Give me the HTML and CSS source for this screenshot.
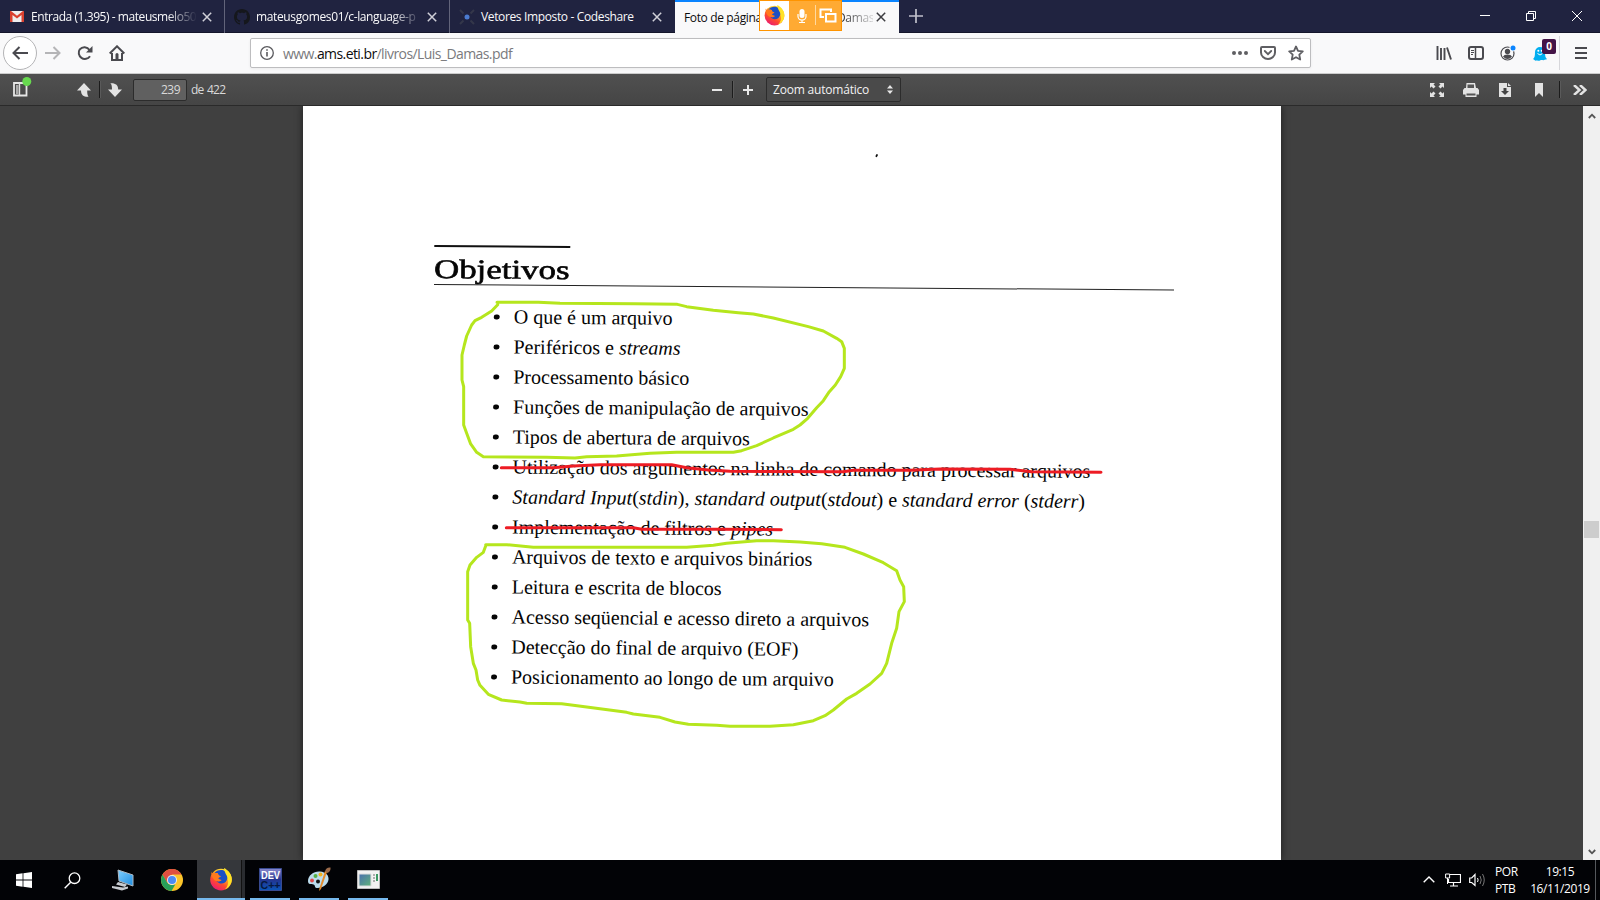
FILE: index.html
```html
<!DOCTYPE html>
<html lang="pt-BR">
<head>
<meta charset="utf-8">
<title>Foto de página inteira - Luis_Damas.pdf</title>
<link rel="stylesheet" href="styles.css">
</head>
<body>
<svg class="defs" width="0" height="0">
  <defs>
    <linearGradient id="ffbody" x1="0.8" y1="0" x2="0.2" y2="1"><stop offset="0" stop-color="#fff04a"/><stop offset=".35" stop-color="#ffb41e"/><stop offset=".65" stop-color="#ff4a2e"/><stop offset="1" stop-color="#e6147d"/></linearGradient>
    <linearGradient id="scr" x1="0" y1="0" x2="1" y2="1"><stop offset="0" stop-color="#7fd0ff"/><stop offset="1" stop-color="#1f8de0"/></linearGradient>
    <linearGradient id="dev" x1="0" y1="0" x2="0" y2="1"><stop offset="0" stop-color="#8b8bd0"/><stop offset=".5" stop-color="#25348f"/><stop offset="1" stop-color="#0a56b8"/></linearGradient>
    <linearGradient id="win" x1="0" y1="0" x2="1" y2="1"><stop offset="0" stop-color="#4a6fae"/><stop offset="1" stop-color="#5fb37a"/></linearGradient>
    <symbol id="firefox" viewBox="0 0 24 24">
      <circle cx="12" cy="12.6" r="10.8" fill="url(#ffbody)"/>
      <path d="M5 6.5C8 2.500 14 2 17 5c2.500 3 2 8-1 10.500-3 2-7 1-8.500-1.500 2 .8 3.800.3 5-1-2 0-3-1-3.500-2l3-1.500C10 9 9 8 9 6.500 7.500 6 6 6.200 5 6.500z" fill="#1c4fc4"/>
      <path d="M2 4.500C2.500 6 3.500 6.500 5 6.300 7 5.800 8.500 6.200 9 6.700c.2 1.300 1 2 2.800 2.200-.3 1-2 1.200-2.800 2 .5 1.300 2 2 3.500 2-1.200 1.500-3 1.800-5 1.100C6 14 3 12 2 4.500z" fill="#ff7a1c"/>
      <path d="M15 1c4 2 8 6 7.800 12-.3 4-3 8-7 9.500 3-3 4-6 3-10.500-.5-4-3.500-6-3.800-11z" fill="#ffe226"/>
    </symbol>
    <symbol id="x" viewBox="0 0 10 10"><path d="M.8.8l8.400 8.400M9.200.8L.8 9.200" stroke="currentColor" stroke-width="1.500"/></symbol>
  </defs>
</svg>

<header class="tabs">
  <div class="tab">
    <svg class="fav gmail" width="14" height="11" viewBox="0 0 14 11"><path d="M0 0h14v11H0z" fill="#eee"/><path d="M0 1v10h2.500V4L7 7.500 11.500 4v7H14V0h-1L7 4.800 1 0H0z" fill="#d9402f"/></svg>
    <span class="label l1">Entrada (1.395) - mateusmelo50</span>
    <svg class="close" width="10" height="10"><use href="#x"/></svg>
  </div>
  <div class="tab">
    <svg class="fav" width="16" height="16" viewBox="0 0 16 16"><path fill="#15171c" d="M8 0C3.580 0 0 3.580 0 8c0 3.540 2.290 6.530 5.470 7.590.4.070.55-.17.55-.38 0-.19-.01-.82-.01-1.490-2.010.37-2.530-.49-2.690-.94-.09-.23-.48-.94-.82-1.130-.28-.15-.68-.52-.01-.53.63-.01 1.080.58 1.230.82.72 1.210 1.870.87 2.330.66.070-.52.28-.87.51-1.070-1.780-.2-3.640-.89-3.640-3.950 0-.87.31-1.590.82-2.150-.08-.2-.36-1.020.08-2.120 0 0 .67-.21 2.200.82.64-.18 1.320-.27 2-.27s1.360.09 2 .27c1.530-1.040 2.200-.82 2.200-.82.44 1.100.16 1.920.08 2.120.51.56.82 1.270.82 2.150 0 3.070-1.870 3.750-3.650 3.950.29.25.54.73.54 1.480 0 1.070-.01 1.930-.01 2.200 0 .21.150.46.55.38A8.010 8.010 0 0016 8c0-4.420-3.580-8-8-8z"/></svg>
    <span class="label l2">mateusgomes01/c-language-p</span>
    <svg class="close" width="10" height="10"><use href="#x"/></svg>
  </div>
  <div class="tab">
    <svg class="fav" width="16" height="16" viewBox="0 0 16 16"><path d="M1 1l3.500 3.500M15 1l-3.500 3.500M1 15l3.500-3.500M15 15l-3.500-3.500" stroke="#34374a" stroke-width="2"/><circle cx="8" cy="8" r="2.500" fill="#4b7bd0"/></svg>
    <span class="label l3">Vetores Imposto - Codeshare</span>
    <svg class="close" width="10" height="10"><use href="#x"/></svg>
  </div>
  <div class="tab active">
    <span class="label l4">Foto de página</span>
    <span class="label l5">Damas</span>
    <svg class="close" width="10" height="10"><use href="#x"/></svg>
    <div class="sharing">
      <span class="ff"><svg width="23" height="22"><use href="#firefox"/></svg></span>
      <svg width="26" height="29" viewBox="0 0 26 29"><rect x="10.500" y="8" width="5" height="9" rx="2.500" fill="#fff"/><path d="M9 13v2.500a4 3.500 0 008 0V13M13 19v2.500M10 21.500h6" fill="none" stroke="#fff" stroke-width="1.200"/></svg>
      <i></i>
      <svg width="26" height="29" viewBox="0 0 26 29"><path d="M9 16H5.500V8.500H16V11" fill="none" stroke="#fff" stroke-width="2"/><path d="M11 13h9.500v7.500H11z" fill="none" stroke="#fff" stroke-width="2"/></svg>
    </div>
  </div>
  <svg class="newtab" width="14" height="14" viewBox="0 0 14 14"><path d="M7 0v14M0 7h14" stroke="#c0c0cb" stroke-width="1.700"/></svg>
  <div class="winbtns">
    <svg width="46" height="32" viewBox="0 0 46 32"><path d="M18 15.500h10" stroke="#fff"/></svg>
    <svg width="46" height="32" viewBox="0 0 46 32"><path d="M18.500 13.500h7v7h-7zM20.500 13v-1.500h7v7H26" fill="none" stroke="#fff"/></svg>
    <svg width="46" height="32" viewBox="0 0 46 32"><path d="M18 11l10 10M28 11L18 21" stroke="#fff"/></svg>
  </div>
</header>

<nav class="navbar">
  <span class="back"><svg width="16" height="14" viewBox="0 0 16 14"><path d="M16 7H1.500M7.500 1l-6 6 6 6" fill="none" stroke="#4a4a4f" stroke-width="2"/></svg></span>
  <span class="slot"><svg width="16" height="14" viewBox="0 0 16 14"><path d="M0 7h14.500M8.500 1l6 6-6 6" fill="none" stroke="#b5b5b7" stroke-width="2"/></svg></span>
  <span class="slot"><svg width="16" height="16" viewBox="0 0 16 16"><path d="M13 11.200A6 6 0 112.800 4.300 6 6 0 0112.500 5" fill="none" stroke="#4a4a4f" stroke-width="2"/><path d="M15.500 1v6.500H9z" fill="#4a4a4f"/></svg></span>
  <span class="slot"><svg width="16" height="16" viewBox="0 0 16 16"><path d="M.7 8.500L8 1.300l7.300 7.200" fill="none" stroke="#4a4a4f" stroke-width="2"/><path d="M3 8v7h10V8" fill="none" stroke="#4a4a4f" stroke-width="2"/><path d="M6.500 15V9.500a1.500 1.500 0 013 0V15z" fill="#4a4a4f"/></svg></span>
  <div class="url">
    <svg width="14" height="14" viewBox="0 0 14 14"><circle cx="7" cy="7" r="6.300" fill="none" stroke="#5a5a5e" stroke-width="1.300"/><path d="M7 6v4.500M7 3.200v1.600" stroke="#5a5a5e" stroke-width="1.600"/></svg>
    <span class="addr">www.<b>ams.eti.br</b>/livros/Luis_Damas.pdf</span>
    <span class="s28"><svg width="16" height="4"><g fill="#5f5f63"><circle cx="2" cy="2" r="2"/><circle cx="8" cy="2" r="2"/><circle cx="14" cy="2" r="2"/></g></svg></span>
    <span class="s28"><svg width="16" height="14" viewBox="0 0 16 14"><path d="M2 1h12q1 0 1 1v4.500a7 6.500 0 01-14 0V2q0-1 1-1z" fill="none" stroke="#5f5f63" stroke-width="2"/><path d="M4.800 5L8 8.200 11.200 5" fill="none" stroke="#5f5f63" stroke-width="1.800" stroke-linecap="round"/></svg></span>
    <span class="s28"><svg width="16" height="16" viewBox="0 0 16 16"><path d="M8 1.500l2 4.300 4.800.6-3.500 3.300.9 4.800L8 12.200l-4.200 2.300.9-4.800L1.200 6.400 6 5.800z" fill="none" stroke="#5f5f63" stroke-width="1.800" stroke-linejoin="round"/></svg></span>
  </div>
  <div class="navright">
    <span class="slot"><svg width="16" height="14" viewBox="0 0 16 14"><path d="M1.500 0v14M5 2v12M8.500 2v12M11 1.500L15 13.500" stroke="#4a4a4f" stroke-width="1.900"/></svg></span>
    <span class="slot"><svg width="16" height="14" viewBox="0 0 16 14"><rect x="1" y="1" width="14" height="12" rx="2" fill="none" stroke="#4a4a4f" stroke-width="2"/><path d="M7.500 1v12" stroke="#4a4a4f" stroke-width="1.500"/><path d="M3 4.500h3M3 6.500h3M3 8.500h2" stroke="#4a4a4f"/></svg></span>
    <span class="slot"><svg width="18" height="16" viewBox="0 0 18 16"><circle cx="8.500" cy="8.500" r="6.500" fill="none" stroke="#4a4a4f" stroke-width="1.200"/><circle cx="8.500" cy="6.500" r="2.700" fill="#4a4a4f"/><path d="M4 11.500q1-2 4.500-2t4.500 2q-2 2.500-4.500 2.500T4 11.500z" fill="#4a4a4f"/><circle cx="14" cy="3" r="3.600" fill="#f9f9fa"/><circle cx="14" cy="3" r="2.500" fill="#0a84ff"/></svg></span>
    <span class="slot ghost"><svg width="14" height="15" viewBox="0 0 14 15"><path d="M2 6a5 5 0 0110 0c0 4 .5 6 2 7-1 1-2 .2-3 1-1 .8-2-.5-4 .5-1.500.8-2-.5-3.500 0S1.500 14 0 13c1.500-1 2-3 2-7z" fill="#00aef0"/><path d="M4.500 7.500q2.500 3 5 0" stroke="#fff" fill="none"/><circle cx="5.300" cy="4.800" r="1" fill="#fff"/><circle cx="8.700" cy="4.800" r="1" fill="#fff"/></svg><em>0</em></span>
  </div>
  <i class="navsep"></i>
  <svg class="menu" width="12" height="12" viewBox="0 0 12 12"><path d="M0 1h12M0 6h12M0 11h12" stroke="#4a4a4f" stroke-width="1.800"/></svg>
</nav>

<div class="pdfbar">
  <svg class="side" width="20" height="20" viewBox="0 0 20 20"><path d="M2 6h12.500v12.500H2z" fill="none" stroke="#e6e6e6" stroke-width="1.800"/><path d="M4 8h2.500v9H4z" fill="#aaa"/><path d="M7.500 6v12" stroke="#ddd" stroke-width="1.400"/><circle cx="14.800" cy="4.500" r="4.500" fill="#67d94f"/></svg>
  <svg class="up" width="14" height="14" viewBox="0 0 14 14"><path d="M7 0l7 7.500h-3.800c0 3 .2 4.800 1.300 6.300C7.500 14.200 4 12.500 4 7.500H0z" fill="#e3e3e3"/></svg>
  <i class="split"></i>
  <svg class="down" width="14" height="14" viewBox="0 0 14 14"><path d="M7 14l7-7.500h-3.800C10.200 2 7.500-.2 2.300.2 3.800 1.500 4 3.500 4 6.500H0z" fill="#e3e3e3"/></svg>
  <span class="pageno">239</span>
  <span class="of">de 422</span>
  <svg class="minus" width="10" height="10" viewBox="0 0 10 10"><path d="M0 5h10" stroke="#e8e8e8" stroke-width="2"/></svg>
  <i class="split"></i>
  <svg class="plus" width="10" height="10" viewBox="0 0 10 10"><path d="M0 5h10M5 0v10" stroke="#e8e8e8" stroke-width="2"/></svg>
  <span class="zoom"><span>Zoom automático</span><svg width="6" height="9" viewBox="0 0 6 9"><path d="M0 3.500L3 0l3 3.500zM0 5.500h6L3 9z" fill="#e8e8e8"/></svg></span>
  <div class="pdfright">
    <svg width="14" height="14" viewBox="0 0 14 14" fill="#e3e3e3"><path d="M0 0h5L3.500 1.500l2 2-2 2-2-2L0 5zM14 0v5l-1.500-1.500-2 2-2-2 2-2L9 0zM0 14V9l1.500 1.500 2-2 2 2-2 2L5 14zM14 14H9l1.500-1.500-2-2 2-2 2 2L14 9z"/></svg>
    <svg width="16" height="14" viewBox="0 0 16 14"><path d="M3.500 0h8.500l1 5h1.500L16 7v4.500h-2.500V14h-11v-2.500H0V7l1.500-2H3z" fill="#e3e3e3"/><path d="M4.500 1.500h6.500V5H4.500zM3.500 10.500h9v2h-9z" fill="#555"/></svg>
    <svg width="12" height="14" viewBox="0 0 12 14"><path d="M0 0h8v4h4v10H0z" fill="#e3e3e3"/><path d="M9 0l3 3H9z" fill="#e3e3e3"/><path d="M4.500 5h3v3H10l-4 4-4-4h2.500z" fill="#444"/></svg>
    <svg width="8" height="14" viewBox="0 0 8 14"><path d="M0 0h8v14L4 10l-4 4z" fill="#e3e3e3"/></svg>
    <i class="split"></i>
    <svg width="14" height="10" viewBox="0 0 14 10"><path d="M1 0l5.500 5L1 10M7 0l5.500 5L7 10" fill="none" stroke="#e3e3e3" stroke-width="2.500"/></svg>
  </div>
</div>

<main class="viewer">
  <article class="page">
    <div class="scan">
      <div class="head"><h1><span>Objetivos</span></h1></div>
      <ul>
        <li>O que é um arquivo</li>
        <li>Periféricos e <em>streams</em></li>
        <li>Processamento básico</li>
        <li>Funções de manipulação de arquivos</li>
        <li>Tipos de abertura de arquivos</li>
        <li>Utilização dos argumentos na linha de comando para processar arquivos</li>
        <li><em>Standard Input</em>(<em>stdin</em>), <em>standard output</em>(<em>stdout</em>) e <em>standard error</em> (<em>stderr</em>)</li>
        <li>Implementação de filtros e <em>pipes</em></li>
        <li>Arquivos de texto e arquivos binários</li>
        <li>Leitura e escrita de blocos</li>
        <li>Acesso seqüencial e acesso direto a arquivos</li>
        <li>Detecção do final de arquivo (EOF)</li>
        <li>Posicionamento ao longo de um arquivo</li>
      </ul>
    </div>
    <svg class="marks" viewBox="303 106 978 754" fill="none" stroke-linejoin="round" stroke-linecap="round">
      <path d="M877 155l-.6 1.200" stroke="#111" stroke-width="1.800"/>
      <g transform="translate(420 230) scale(.33333)" stroke-width="9">
        <path stroke="#b5e61d" d="M231 217H355L420 220L645 221L772 223L800 230L880 241L955 248L1000 252L1060 264L1165 290L1210 303L1250 325L1265 335L1273 355V415L1262 440L1246 465L1228 485L1210 512L1190 533L1163 565L1140 585L1120 598L1060 624L1010 647L965 662L940 667H770L690 670L590 678L500 680L465 684L380 682L190 680L170 667L152 642L140 610L131 585V470L126 450V375L133 345L140 318L155 285L165 272L185 262L215 243L233 224"/>
      </g>
      <g transform="translate(420 450) scale(.33333)" stroke-width="9">
        <path stroke="#b5e61d" d="M197 284L260 284L340 292H800L880 286L920 280L1010 272H1060L1140 276L1205 281L1275 292L1330 312L1390 338L1430 362L1440 390L1451 410L1453 455L1437 485L1430 535L1415 580L1400 640L1385 670L1350 702L1310 730L1280 747L1240 780L1215 797L1180 812L1120 824L1050 829H930L890 826L805 823L765 816L720 802L640 792L620 787L500 771L425 761L320 760L300 756L245 750L205 733L180 706L173 690L168 660L160 640L152 590L149 520L143 510V365L150 345L170 322L190 307L197 288"/>
        <path stroke="#ed1c24" d="M244 53H400L460 48L540 44H755L800 53L865 60L930 64L1270 65L1300 61H1470L1560 57L1770 58L1835 65L2043 67"/>
        <path stroke="#ed1c24" d="M259 233H640L665 238H900L1084 239"/>
      </g>
    </svg>
  </article>
  <div class="scroll">
    <svg width="8" height="6" viewBox="0 0 8 6"><path d="M.8 5L4 1.700 7.200 5" fill="none" stroke="#555" stroke-width="1.800"/></svg>
    <i class="thumb"></i>
    <svg width="8" height="6" viewBox="0 0 8 6"><path d="M.8 1L4 4.300 7.200 1" fill="none" stroke="#555" stroke-width="1.800"/></svg>
  </div>
</main>

<footer class="taskbar">
  <span class="app start"><svg width="16" height="16" viewBox="0 0 16 16" fill="#fff"><path d="M0 2.200L6.600 1.300V7.600H0zM7.400 1.200L16 0V7.600H7.400zM0 8.400h6.600v6.300L0 13.800zM7.400 8.400H16V16l-8.600-1.200z"/></svg></span>
  <span class="app"><svg width="17" height="17" viewBox="0 0 17 17"><circle cx="10.500" cy="6.200" r="5.300" fill="none" stroke="#fff" stroke-width="1.300"/><path d="M6.700 10.200L.7 16.200" stroke="#fff" stroke-width="1.400"/></svg></span>
  <span class="app pc"><svg width="24" height="22" viewBox="0 0 24 22"><path d="M7 1l15 5v11L8 12z" fill="url(#scr)" stroke="#aeb9c2"/><path d="M7 13l9 2.500-2 2.500-9-2.500zM1 17l11 1.500 5-1v2l-6 2L1 19z" fill="#c7cbd0"/></svg></span>
  <span class="app chrome"><svg width="22" height="22" viewBox="0 0 22 22"><circle cx="11" cy="11" r="11" fill="#fbc52b"/><path d="M1.500 5.500A11 11 0 0120.500 5.500H11L6.200 13.700z" fill="#df4f41"/><path d="M1.500 5.500l4.800 8.200c2 2.500 5 3 8 1.800L10.500 22A11 11 0 011.500 5.500z" fill="#28a05a"/><circle cx="11" cy="11" r="5" fill="#eee"/><circle cx="11" cy="11" r="4" fill="#4b8bf5"/></svg></span>
  <span class="app fx"><svg width="24" height="24"><use href="#firefox"/></svg></span>
  <span class="app run"><svg width="23" height="23" viewBox="0 0 23 23"><path d="M.5.5h22v22H.5z" fill="url(#dev)" stroke="#384a90"/><text x="11.500" y="10.500" textLength="19" lengthAdjust="spacingAndGlyphs" class="devtxt" fill="#fff">DEV</text><text x="11.500" y="20.500" textLength="20" lengthAdjust="spacingAndGlyphs" class="devtxt" fill="#07183f">C++</text></svg></span>
  <span class="app run"><svg width="24" height="24" viewBox="0 0 24 24"><path d="M1 14C1 8 7 4 13 4.500c6 .5 9 4 8.500 8-.5 5-6 9-12 8.500-2 0-1-3-3-3.500S1 18 1 14z" fill="#bcdcec"/><circle cx="5" cy="13.500" r="1.900" fill="#e04b4b"/><circle cx="8.500" cy="9" r="2" fill="#55b043"/><circle cx="13.500" cy="7.500" r="2" fill="#f2b01e"/><circle cx="11" cy="14.500" r="2" fill="#111"/><path d="M20 5L14 22l-2 2 .5-3L18 4z" fill="#e58b2b"/><path d="M18 4.500Q19 0 23.500.5 24 4 20.500 6z" fill="#9a6a4a"/></svg></span>
  <span class="app run"><svg width="23" height="19" viewBox="0 0 23 19"><path d="M.5.5h22v18H.5z" fill="#f2f2f2" stroke="#bbb"/><path d="M2 4h12v12H2z" fill="url(#win)" stroke="#ddd"/><path d="M16 5h2M16 8h2M16 11h2" stroke="#999" stroke-width="1.500"/><path d="M20 4v7" stroke="#3c9a64" stroke-width="2"/></svg></span>
  <div class="tray">
    <svg width="12" height="7" viewBox="0 0 12 7"><path d="M.7 6.300L6 1l5.300 5.300" fill="none" stroke="#fff" stroke-width="1.400"/></svg>
    <svg width="16" height="14" viewBox="0 0 16 14"><path d="M5 1.500h10.500v8H3.500V6M8.500 10v3M5 13h8" fill="none" stroke="#fff" stroke-width="1.200"/><path d="M.6 1h4v4h-4zM2.500 5v6" fill="none" stroke="#fff"/></svg>
    <svg width="16" height="14" viewBox="0 0 16 14"><path d="M.7 5h2L6 1.500v11L2.700 9.500h-2z" fill="none" stroke="#fff" stroke-width="1.200"/><path d="M8.500 5q1.300 2 0 4" fill="none" stroke="#fff"/><path d="M11 3q2.500 4 0 8M13.500 1q3.500 6 0 12" fill="none" stroke="#777"/></svg>
    <span class="lang">POR<br>PTB</span>
    <span class="clock">19:15<br>16/11/2019</span>
    <i></i>
  </div>
</footer>
</body>
</html>
```
FILE: styles.css
```css
* { box-sizing: border-box; }
body {
  margin: 0; width: 1600px; height: 900px; overflow: hidden;
  display: flex; flex-direction: column;
  font-family: "Open Sans", "Noto Sans", sans-serif; font-size: 12px;
}
svg { display: block; flex: none; }
.defs { position: absolute; }

/* tab strip */
.tabs { height: 33px; flex: none; background: #202340; display: flex; align-items: center; border-bottom: 1px solid #14162b; }
.tab { width: 225px; height: 33px; flex: none; display: flex; align-items: center; padding: 1px 12px 0 9px; color: #f9f9fa; border-right: 1px solid #62647a; }
.fav { margin-right: 6px; }
.gmail { margin: 0 7px 0 1px; }
.label { white-space: nowrap; letter-spacing: -0.36px; }
.l1, .l2 { width: 166px; -webkit-mask-image: linear-gradient(90deg, #000 82%, transparent); mask-image: linear-gradient(90deg, #000 82%, transparent); }
.l1 { letter-spacing: -0.44px; }
.close { margin-left: auto; color: #d0d0d8; }
.tab:nth-child(3) { border-right: 0; padding-right: 13px; }
.active { position: relative; background: #f9f9fa; color: #0c0c0d; border: 0; border-top: 2px solid #0a84ff; padding: 0 13px 0 9px; width: 224px; }
.active .close { color: #3c3c40; }
.l4 { width: 90px; }
.l5 { width: 36px; margin-left: 63px; -webkit-mask-image: linear-gradient(90deg, #333, rgba(0,0,0,.15)); mask-image: linear-gradient(90deg, #333, rgba(0,0,0,.15)); }
.sharing { position: absolute; left: 84px; top: -2px; width: 83px; height: 31px; display: flex; align-items: center; background: #ffaa33; border: 1px solid #ff9400; }
.sharing .ff { width: 29px; height: 29px; background: #fff; display: grid; place-items: center; }
.sharing i { width: 1px; height: 20px; background: #ffd9a0; margin-right: -1px; }
.newtab { margin-left: 10px; }
.winbtns { margin-left: auto; display: flex; }

/* navigation bar */
.navbar { height: 41px; flex: none; background: #f9f9fa; display: flex; align-items: center; border-bottom: 1px solid #ccc; padding-left: 3px; }
.back { width: 34px; height: 34px; border: 1px solid #b4b4b6; border-radius: 50%; background: #fff; display: grid; place-items: center; }
.slot { width: 32px; height: 32px; display: grid; place-items: center; }
.url { width: 1061px; height: 30px; margin-left: 117px; background: #fff; border: 1px solid #bdbdbf; border-radius: 2px; display: flex; align-items: center; padding: 0 0 0 9px; box-shadow: 0 1px 3px rgba(0,0,0,.06); }
.addr { flex: 1; margin-left: 9px; font-size: 14px; color: #7a7a7d; letter-spacing: -0.58px; padding-top: 1px; }
.addr b { font-weight: 400; color: #0c0c0d; }
.s28 { width: 28px; display: grid; place-items: center; }
.navright { display: flex; margin-left: 117px; }
.ghost { position: relative; }
.ghost em { position: absolute; left: 18px; top: 2px; width: 14px; height: 15px; border-radius: 2px; background: #441447; color: #fff; font: bold 10px/15px "Open Sans", sans-serif; text-align: center; }
.navsep { width: 1px; height: 34px; background: #d7d7db; margin-left: 3px; }
.menu { margin-left: 15px; }

/* PDF toolbar */
.pdfbar { height: 32px; flex: none; display: flex; align-items: center; background: linear-gradient(#505050, #454545); border-bottom: 1px solid #2a2a2a; color: #d9d9d9; padding-left: 12px; position: relative; z-index: 1; }
.side { margin-top: -5px; }
.up { margin-left: 45px; }
.split { width: 1px; height: 17px; background: #1c1c1c; box-shadow: 1px 0 0 #5a5a5a; }
.up + .split { margin: 0 8px; }
.pageno { width: 54px; height: 22px; margin-left: 11px; background: #606060; border: 1px solid #2c2c2c; border-radius: 2px; text-align: right; line-height: 20px; padding-right: 6px; letter-spacing: -.5px; }
.of { width: 36px; margin-left: 4px; letter-spacing: -.75px; word-spacing: 1px; }
.minus { margin-left: 485px; margin-right: 10px; }
.plus { margin-left: 10px; }
.zoom { width: 135px; height: 25px; margin-left: 13px; border: 1px solid #2c2c2c; border-radius: 2px; background: #4a4a4a; color: #f2f2f2; display: flex; align-items: center; justify-content: space-between; padding: 0 7px 0 6px; letter-spacing: -.2px; }
.pdfright { margin-left: auto; display: flex; align-items: center; padding-right: 13px; }
.pdfright svg:nth-child(2) { margin-left: 19px; }
.pdfright svg:nth-child(3) { margin-left: 20px; }
.pdfright svg:nth-child(4) { margin-left: 24px; margin-right: 16px; }
.pdfright svg:nth-child(6) { margin-left: 13px; }

/* document */
.viewer { height: 754px; flex: none; background: #404040; display: flex; padding-left: 303px; }
.page { position: relative; width: 978px; height: 754px; background: #fff; box-shadow: 0 0 8px rgba(0,0,0,.55); clip-path: inset(0 -10px); }
.scan { padding: 139px 107px 0 131px; font-family: "Liberation Serif", serif; color: #050505; transform: rotate(.43deg); transform-origin: 131px 178px; }
.head { height: 40px; border-bottom: 1px solid #222; }
.head h1 { margin: 0; width: 136px; height: 38px; border-top: 2px solid #111; font-size: 27px; font-weight: 400; line-height: 44px; -webkit-text-stroke: .6px #050505; white-space: nowrap; }
.head span { display: inline-block; transform: scaleX(1.29); transform-origin: 0 0; }
.scan ul { list-style: none; margin: 16px 0 0; padding: 0; }
.scan li { height: 30.040px; line-height: 30px; font-size: 20px; display: flex; white-space: pre; }
.scan li::before { content: ""; width: 5.500px; height: 5.500px; border-radius: 50%; background: #050505; margin: 12.500px 14.200px 0 60.300px; flex: none; }
.marks { position: absolute; left: 0; top: 0; width: 978px; height: 754px; }
.scroll { width: 17px; margin-left: auto; background: #f0f0f0; display: flex; flex-direction: column; align-items: center; justify-content: space-between; padding: 7px 0 5px; }
.thumb { width: 15px; height: 17px; background: #cdcdcd; margin-top: 91px; }

/* taskbar */
.taskbar { height: 40px; flex: none; background: #020306; display: flex; }
.app { width: 49px; height: 40px; display: grid; place-items: center; }
.start { width: 48px; }
.pc { width: 52px; }
.chrome { width: 48px; padding-right: 3px; }
.fx { width: 48px; background: linear-gradient(90deg, #35373b 44px, #111 44px, #111 45px, #2a2c30 45px); border-bottom: 2px solid #76b9ed; padding-right: 1px; }
.run { width: 40px; margin-left: 5px; border-bottom: 2px solid #76b9ed; }
.run + .run { margin-left: 9px; }
.devtxt { font: bold 10px "Liberation Sans", sans-serif; text-anchor: middle; }
.tray { margin-left: auto; display: flex; align-items: center; color: #fff; font-size: 12px; line-height: 17px; letter-spacing: -.4px; padding-bottom: 1px; }
.tray svg { margin-right: 10px; }
.tray svg + svg { margin-right: 8px; }
.lang { margin-left: 2px; width: 28px; }
.clock { width: 70px; text-align: center; margin-left: 2px; }
.tray i { width: 1px; height: 40px; background: #55585c; margin-right: 4px; }
```
